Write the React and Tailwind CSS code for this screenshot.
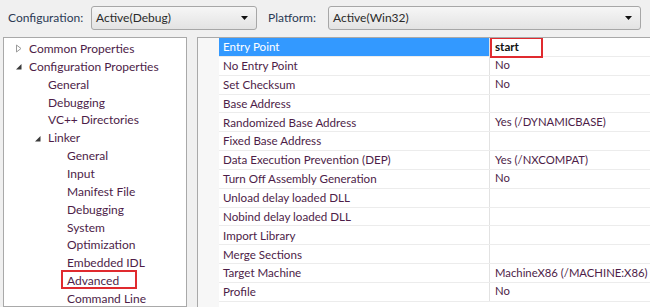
import React from 'react';

const font = { fontFamily: '"Segoe UI", Lato, "Noto Sans", sans-serif' };

const tree = [
  { label: 'Common Properties', level: 0, arrow: 'closed' },
  { label: 'Configuration Properties', level: 0, arrow: 'open' },
  { label: 'General', level: 1 },
  { label: 'Debugging', level: 1 },
  { label: 'VC++ Directories', level: 1 },
  { label: 'Linker', level: 1, arrow: 'open' },
  { label: 'General', level: 2 },
  { label: 'Input', level: 2 },
  { label: 'Manifest File', level: 2 },
  { label: 'Debugging', level: 2 },
  { label: 'System', level: 2 },
  { label: 'Optimization', level: 2 },
  { label: 'Embedded IDL', level: 2 },
  { label: 'Advanced', level: 2, boxed: true },
  { label: 'Command Line', level: 2 },
];

const props = [
  ['Entry Point', 'start'],
  ['No Entry Point', 'No'],
  ['Set Checksum', 'No'],
  ['Base Address', ''],
  ['Randomized Base Address', 'Yes (/DYNAMICBASE)'],
  ['Fixed Base Address', ''],
  ['Data Execution Prevention (DEP)', 'Yes (/NXCOMPAT)'],
  ['Turn Off Assembly Generation', 'No'],
  ['Unload delay loaded DLL', ''],
  ['Nobind delay loaded DLL', ''],
  ['Import Library', ''],
  ['Merge Sections', ''],
  ['Target Machine', 'MachineX86 (/MACHINE:X86)'],
  ['Profile', 'No'],
];

const Arrow = ({ type }) =>
  type === 'closed' ? (
    <svg width="8" height="9" viewBox="0 0 8 9">
      <path d="M1.5 1 L6 4.5 L1.5 8 Z" fill="none" stroke="#9a9a9a" strokeWidth="1" />
    </svg>
  ) : (
    <svg width="8" height="9" viewBox="0 0 8 9">
      <path d="M6.5 2 L6.5 7.5 L1 7.5 Z" fill="#3a3a3a" />
    </svg>
  );

const Dropdown = ({ value, className }) => (
  <div
    className={`h-[24px] flex items-center justify-between rounded-[3px] border border-[#a7a7a7] bg-gradient-to-b from-[#f6f6f6] to-[#e3e3e3] pl-[4px] pr-[8px] text-[12px] text-[#2a2a2a] ${className}`}
  >
    <span>{value}</span>
    <svg width="7" height="4" viewBox="0 0 7 4">
      <path d="M0 0 L7 0 L3.5 4 Z" fill="#111" />
    </svg>
  </div>
);

export default function App() {
  return (
    <div className="w-[650px] h-[307px] overflow-hidden bg-[#f0f0f0] flex flex-col" style={font}>
      <div className="h-[35px] flex items-center pl-[8px] text-[12px] text-[#2b3a55] shrink-0">
        <span className="w-[83px]">Configuration:</span>
        <Dropdown value="Active(Debug)" className="w-[166px]" />
        <span className="ml-[11px] w-[60px]">Platform:</span>
        <Dropdown value="Active(Win32)" className="w-[313px]" />
      </div>

      <div className="flex flex-1 pt-[2px] min-h-0">
        <div className="ml-[3px] w-[184px] border border-[#a9a9a9] bg-white pt-[2px] text-[12px] text-[#4d1d48] overflow-hidden">
          {tree.map((t, i) => (
            <div key={i} className="h-[17.86px] flex items-center" style={{ paddingLeft: 11 + t.level * 19 }}>
              <span className="w-[12px] flex items-center justify-start">{t.arrow && <Arrow type={t.arrow} />}</span>
              <span className={`ml-[2px] leading-none ${t.boxed ? 'relative' : ''}`}>
                {t.label}
                {t.boxed && (
                  <span className="absolute left-[-6px] top-[-5px] w-[76px] h-[19px] border-2 border-[#e02a2f]" />
                )}
              </span>
            </div>
          ))}
        </div>

        <div className="ml-[10px] flex-1 border-t border-l border-[#a9a9a9] bg-white flex overflow-hidden">
          <div className="w-[21px] bg-[#f7f7f7] shrink-0" />
          <div className="flex-1 text-[11.6px] text-[#4d1d48]">
            {props.map(([k, v], i) => (
              <div key={i} className="h-[18.85px] flex border-b border-[#ececec]">
                <div
                  className={`w-[271px] shrink-0 flex items-center pl-[4px] border-r border-[#e2e2e2] ${
                    i === 0 ? 'bg-[#3399ff] text-white' : ''
                  }`}
                >
                  {k}
                </div>
                <div className="flex-1 flex items-center pl-[5px] whitespace-nowrap relative text-[11.3px]">
                  {i === 0 ? (
                    <>
                      <span className="font-bold text-[#111] text-[11.6px]">{v}</span>
                      <span className="absolute left-[0px] top-[-1px] w-[53px] h-[21px] border-2 border-[#e02a2f]" />
                    </>
                  ) : (
                    v
                  )}
                </div>
              </div>
            ))}
          </div>
        </div>
      </div>
    </div>
  );
}
